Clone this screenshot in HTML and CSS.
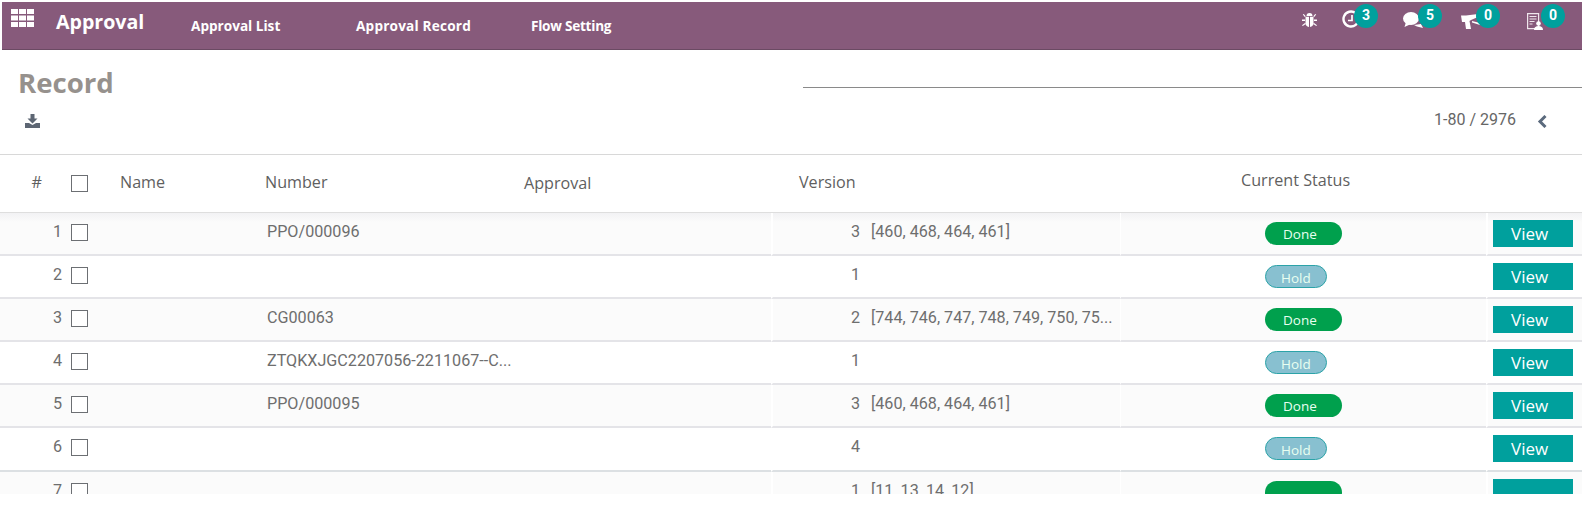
FILE: index.html
```html
<!DOCTYPE html>
<html lang="en">
<head>
<meta charset="utf-8">
<title>Record</title>
<link rel="stylesheet" href="styles.css">
</head>
<body>
<nav class="nav">
  <svg class="apps" width="23" height="18" viewBox="0 0 23 18"><path fill="#fff" d="M0 0h7v5H0zM8 0h7v5H8zM16 0h7v5h-7zM0 6.500h7v5H0zM8 6.500h7v5H8zM16 6.500h7v5h-7zM0 13h7v5H0zM8 13h7v5H8zM16 13h7v5h-7z"/></svg>
  <span class="brand">Approval</span>
  <a class="menu m1">Approval List</a>
  <a class="menu m2">Approval Record</a>
  <a class="menu m3">Flow Setting</a>
  <div class="systray">
    <span class="tray t-bug"><svg width="15" height="14" viewBox="0 0 15 14"><path fill="#fff" d="M4.500 3a3 3 0 0 1 6 0zM3.500 3.800h3.500V14C4.800 13.800 3.500 12 3.500 10zM8 3.800h3.500V10c0 2-1.300 3.800-3.500 4zM.800 1.500l1-.6L3.700 3.300l-.9.7zM14.200 1.500l-1-.6-1.900 2.400.9.7zM0 6.500h3v1.400H0zM12 6.500h3v1.400h-3zM.800 13l-.8-.8 3-2.200.7 1zM14.200 13l.8-.8-3-2.200-.7 1z"/></svg></span>
    <span class="tray t-clock"><svg width="18" height="18" viewBox="0 0 18 18"><path fill="none" stroke="#fff" stroke-width="2.400" d="M16.500 9a7.500 7.500 0 1 1-3-6"/><path fill="none" stroke="#fff" stroke-width="1.700" d="M10 5v5.500H6"/></svg><b class="badge">3</b></span>
    <span class="tray t-chat"><svg width="20" height="16" viewBox="0 0 20 16"><ellipse cx="8" cy="6.500" rx="8" ry="6.500" fill="#fff"/><path fill="#fff" d="M3 10 1.500 15 8 12zM11 13l7-1 2 4-6-1.500z"/></svg><b class="badge">5</b></span>
    <span class="tray t-horn"><svg width="20" height="15" viewBox="0 0 20 15"><path fill="#fff" d="M0 1.500h5L17 0v3L10 6 8.500 7 10 15H5L4 8H1z"/><path fill="#fff" d="M11 7l8 2v2l-8-2.500z"/></svg><b class="badge">0</b></span>
    <span class="tray t-doc"><svg width="17" height="17" viewBox="0 0 17 17"><path fill="none" stroke="#efe6ec" stroke-width="1.200" d="M.6.600h11v15H.6z"/><path stroke="#efe6ec" stroke-width="1.200" d="M2.500 3.500h7M2.500 6h7M2.500 8.500h5M2.500 11h3"/><circle cx="11.500" cy="10.500" r="2.300" fill="#fff"/><path fill="#fff" d="M7 17c0-3 2-4 4.500-4S16 14 16 17z"/></svg><b class="badge">0</b></span>
  </div>
</nav>

<section class="control">
  <div class="head-row">
    <h1 class="title">Record</h1>
    <div class="search-line"></div>
  </div>
  <div class="tool-row">
    <svg class="download" width="15" height="14" viewBox="0 0 15 14"><path fill="#5d6673" d="M5.500 0h4v4.500h3L7.500 9.500 2.500 4.500h3zM0 9h4l3.500 2L11 9h4v5H0z"/></svg>
    <div class="pager"><span>1-80 / 2976</span><svg class="chevron" width="10" height="13" viewBox="0 0 10 13"><path fill="none" stroke="#5b6a7d" stroke-width="3" d="M8.500 1 3 6.500 8.500 12"/></svg></div>
  </div>
</section>

<div class="list">
  <table class="table">
    <colgroup>
      <col class="c-num"><col class="c-check"><col class="c-name"><col class="c-number"><col class="c-approval"><col class="c-version"><col class="c-ids"><col class="c-status"><col class="c-action">
    </colgroup>
    <thead>
      <tr>
        <th class="h-hash">#</th>
        <th class="h-check"><span class="box"></span></th>
        <th class="h-name">Name</th>
        <th>Number</th>
        <th class="h-approval">Approval</th>
        <th class="h-version">Version</th>
        <th></th>
        <th class="h-status">Current Status</th>
        <th></th>
      </tr>
    </thead>
    <tbody>
      <tr><td class="num">1</td><td class="check"><span class="box"></span></td><td></td><td class="number">PPO/000096</td><td></td><td class="ver">3</td><td class="ids">[460, 468, 464, 461]</td><td class="status"><span class="pill done">Done</span></td><td class="action"><a class="view">View</a></td></tr>
      <tr><td class="num">2</td><td class="check"><span class="box"></span></td><td></td><td class="number"></td><td></td><td class="ver">1</td><td class="ids"></td><td class="status"><span class="pill hold">Hold</span></td><td class="action"><a class="view">View</a></td></tr>
      <tr><td class="num">3</td><td class="check"><span class="box"></span></td><td></td><td class="number">CG00063</td><td></td><td class="ver">2</td><td class="ids">[744, 746, 747, 748, 749, 750, 75...</td><td class="status"><span class="pill done">Done</span></td><td class="action"><a class="view">View</a></td></tr>
      <tr><td class="num">4</td><td class="check"><span class="box"></span></td><td></td><td class="number">ZTQKXJGC2207056-2211067--C...</td><td></td><td class="ver">1</td><td class="ids"></td><td class="status"><span class="pill hold">Hold</span></td><td class="action"><a class="view">View</a></td></tr>
      <tr><td class="num">5</td><td class="check"><span class="box"></span></td><td></td><td class="number">PPO/000095</td><td></td><td class="ver">3</td><td class="ids">[460, 468, 464, 461]</td><td class="status"><span class="pill done">Done</span></td><td class="action"><a class="view">View</a></td></tr>
      <tr class="last"><td class="num">6</td><td class="check"><span class="box"></span></td><td></td><td class="number"></td><td></td><td class="ver">4</td><td class="ids"></td><td class="status"><span class="pill hold">Hold</span></td><td class="action"><a class="view">View</a></td></tr>
      <tr><td class="num">7</td><td class="check"><span class="box"></span></td><td></td><td class="number"></td><td></td><td class="ver">1</td><td class="ids">[11, 13, 14, 12]</td><td class="status"><span class="pill done blank">Done</span></td><td class="action"><a class="view blank">View</a></td></tr>
    </tbody>
  </table>
</div>
</body>
</html>
```

FILE: styles.css
```css
* { box-sizing: border-box; }
html, body { margin: 0; height: 100%; background: #fff; overflow: hidden; }
body { font-family: Roboto, sans-serif; color: #666; padding-top: 2px; }

.nav {
  height: 48px;
  margin-left: 2px;
  background: #875a7b;
  border-bottom: 1px solid #6b4a63;
  color: #fff;
  display: flex;
  align-items: flex-start;
  font-family: "Open Sans", sans-serif;
}
.apps { margin: 7px 0 0 9px; flex: none; }
.brand { margin: 6px 0 0 22px; font-size: 19.600px; font-weight: 700; line-height: 28px; width: 135px; flex: none; }
.menu { font-size: 13.600px; font-weight: 700; line-height: 18px; margin-top: 15px; flex: none; }
.m1 { width: 165px; }
.m2 { width: 175px; letter-spacing: .2px; }
.m3 { letter-spacing: -.25px; }
.systray { margin-left: auto; display: flex; align-items: flex-start; height: 100%; }
.tray { position: relative; display: block; flex: none; }
.tray svg { display: block; }
.t-bug { margin-top: 11px; width: 40px; }
.t-clock { margin-top: 8px; width: 61px; }
.t-chat { margin-top: 10px; width: 58px; }
.t-horn { margin-top: 12px; width: 66px; }
.t-doc { margin-top: 11px; width: 55px; }
.badge {
  position: absolute;
  width: 24px;
  height: 24px;
  border-radius: 50%;
  background: #00a09d;
  color: #fff;
  font: 700 14px/23px Roboto, sans-serif;
  text-align: center;
}
.t-clock .badge { left: 12px; top: -6px; }
.t-chat .badge { left: 15px; top: -8px; }
.t-horn .badge { left: 15px; top: -10px; }
.t-doc .badge { left: 14px; top: -9px; }

.control { height: 104px; }
.head-row { display: flex; align-items: flex-start; justify-content: space-between; height: 53px; }
.title { margin: 14px 0 0 18px; font: 700 27.600px/36px "Open Sans", sans-serif; color: #96918d; }
.search-line { width: 779px; height: 1px; margin-top: 37px; background: #8a8a8a; }
.tool-row { display: flex; justify-content: space-between; align-items: flex-start; padding: 7px 35px 0 25px; }
.download { margin-top: 4px; }
.pager { display: flex; gap: 21px; font-size: 16px; line-height: 20px; color: #666; }
.chevron { margin-top: 5px; }

.list { height: 340px; overflow: hidden; border-top: 1px solid #d8d8d8; }
.table { width: 100%; border-collapse: separate; border-spacing: 0; table-layout: fixed; }
.c-num { width: 65px; } .c-check { width: 54px; } .c-name { width: 146px; }
.c-number { width: 254px; } .c-approval { width: 252px; } .c-version { width: 92px; }
.c-ids { width: 257px; } .c-status { width: 366px; } .c-action { width: 96px; }
th { font: 400 16.150px/22px "Open Sans", sans-serif; color: #5f5f5f; text-align: left; height: 58px; padding: 0 0 4px; border-bottom: 1px solid #dedede; }
th.h-hash { text-align: right; padding-right: 23px; }
th.h-check { padding: 0; }
th.h-name { padding-left: 1px; }
th.h-approval { padding: 0 0 1px 5px; }
th.h-version { padding-left: 28px; }
th.h-status { padding: 0 0 7px 121px; }
td { height: 43.100px; padding: 8px 0 0; vertical-align: top; font-size: 16.150px; line-height: 22px; color: #6e6e6e; border-bottom: 2px solid #e4e4e8; white-space: nowrap; }
tbody tr:nth-child(odd) td { background: #fbfbfb; }
tbody tr:first-child td { background: linear-gradient(#f2f2f4, #fbfbfb 9px); }
.last td { border-bottom-color: #dce0e3; }
td.num { text-align: right; padding-right: 3px; }
td.check { padding-top: 11px; }
.box { display: block; width: 17px; height: 17px; margin-left: 6px; border: 1.500px solid #6c6f73; background: #fff; }
td.number { padding-left: 2px; }
td.ver { border-left: 2px solid #fff; text-align: right; padding-right: 3px; }
td.ids { padding-left: 8px; }
td.status { border-left: 1px solid #fff; padding-top: 9px; }
td.action { border-left: 2px solid #fff; padding-top: 7px; }
.pill { display: block; width: 77px; height: 23px; margin-left: 144px; border-radius: 12px; font: 13.500px/24px "Open Sans", sans-serif; color: #e8fff1; padding-left: 18px; }
.done { background: #00a04d; }
.hold { width: 62px; background: #88c0d0; border: 1px solid #2ca3a8; padding-left: 15px; }
.view { display: block; width: 80px; height: 27px; margin-left: 5px; padding-left: 18px; background: #00a09d; color: #fff; font: 17px/28px "Open Sans", sans-serif; }
.blank { color: transparent; }
```
